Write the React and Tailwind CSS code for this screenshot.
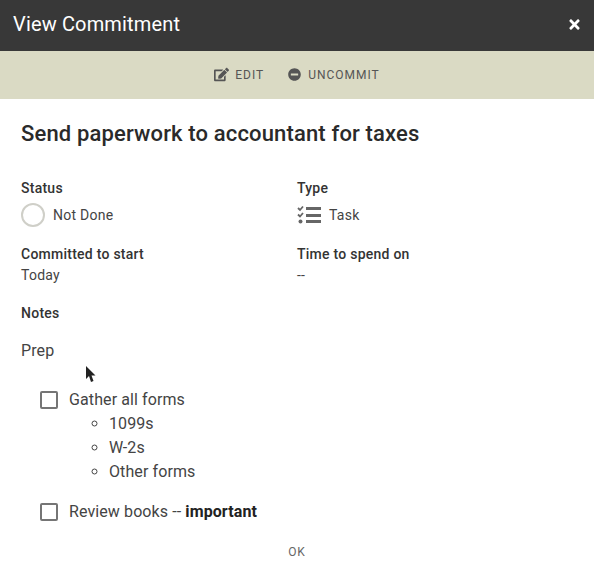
import React from 'react';
import { FaEdit, FaMinusCircle, FaTimes } from 'react-icons/fa';

function TaskIcon() {
  return (
    <svg width="24" height="20" viewBox="0 0 24 20" className="text-[#666]">
      <path d="M1 3l2 2 3-3.5M1 9.500l2 2 3-3.500" fill="none" stroke="currentColor" strokeWidth="1.800" />
      <circle cx="3.500" cy="16.500" r="2" fill="currentColor" />
      <rect x="9" y="2" width="15" height="3" fill="currentColor" />
      <rect x="9" y="9" width="15" height="3" fill="currentColor" />
      <rect x="9" y="15" width="15" height="3" fill="currentColor" />
    </svg>
  );
}

function Check({ children }) {
  return (
    <div className="flex items-center">
      <span className="w-[18px] h-[18px] border-2 border-[#757575] rounded-[2px] mr-[11px] shrink-0"></span>
      <span>{children}</span>
    </div>
  );
}

export default function App() {
  return (
    <div className="w-[594px] h-[582px] flex flex-col bg-white overflow-hidden font-['Roboto',sans-serif] text-[#333]">
      <header className="h-[51px] bg-[#383838] text-white flex items-center justify-between pl-[13px] pr-[12px] pb-[3px] shrink-0">
        <h1 className="text-[20px] tracking-[0.15px]">View Commitment</h1>
        <FaTimes className="text-[15px] mt-[1px]" />
      </header>

      <div className="h-[48px] bg-[#dadac4] flex items-center justify-center gap-[24px] pb-[1px] text-[12px] tracking-[1px] text-[#555] shrink-0">
        <span className="flex items-center gap-[6px]"><FaEdit className="text-[15px]" />EDIT</span>
        <span className="flex items-center gap-[7px]"><FaMinusCircle className="text-[13px]" />UNCOMMIT</span>
      </div>

      <main className="flex-1 flex flex-col pl-[21px]">
        <h2 className="mt-[21px] text-[22px] leading-[28px] font-medium tracking-[0.15px] text-[#2a2a2a]">Send paperwork to accountant for taxes</h2>

        <div className="mt-[31px] grid grid-cols-[276px_1fr] text-[14px] tracking-[0.25px]">
          <div>
            <div className="font-medium leading-[18px]">Status</div>
            <div className="flex items-center mt-[6px] h-[24px] text-[#444]">
              <span className="w-[24px] h-[24px] rounded-full border-2 border-[#cfcfc8] mr-[8px]"></span>
              Not Done
            </div>
          </div>
          <div>
            <div className="font-medium leading-[18px]">Type</div>
            <div className="flex items-center mt-[6px] h-[24px] text-[#444]">
              <span className="mr-[8px] flex"><TaskIcon /></span>
              Task
            </div>
          </div>
          <div className="mt-[18px]">
            <div className="font-medium leading-[18px]">Committed to start</div>
            <div className="mt-[3px] leading-[18px] text-[#444]">Today</div>
          </div>
          <div className="mt-[18px]">
            <div className="font-medium leading-[18px]">Time to spend on</div>
            <div className="mt-[3px] leading-[18px] text-[#444]">--</div>
          </div>
        </div>

        <div className="mt-[20px] text-[14px] tracking-[0.25px] font-medium leading-[18px]">Notes</div>
        <div className="mt-[17px] text-[16px] leading-[24px] tracking-[0.1px] text-[#444]">Prep</div>

        <div className="mt-[25px] ml-[19px] text-[16px] leading-[24px] tracking-[0.1px] text-[#444]">
          <Check>Gather all forms</Check>
          <ul className="list-[circle] ml-[49px] pl-[20px]">
            <li>1099s</li>
            <li>W-2s</li>
            <li>Other forms</li>
          </ul>
          <div className="mt-[16px]">
            <Check>Review books -- <b className="font-bold text-[#222]">important</b></Check>
          </div>
        </div>

        <div className="mt-[19px] pr-[21px] text-center text-[12px] tracking-[0.8px] text-[#666]">OK</div>
      </main>

      {/* stray mouse pointer from the screen capture */}
      <svg width="12" height="18" viewBox="0 0 12 18" className="absolute left-[86px] top-[366px]">
        <path d="M0 0v13l3-3 2 6 2.500-1-2-5.500h4z" fill="#222" />
      </svg>
    </div>
  );
}
